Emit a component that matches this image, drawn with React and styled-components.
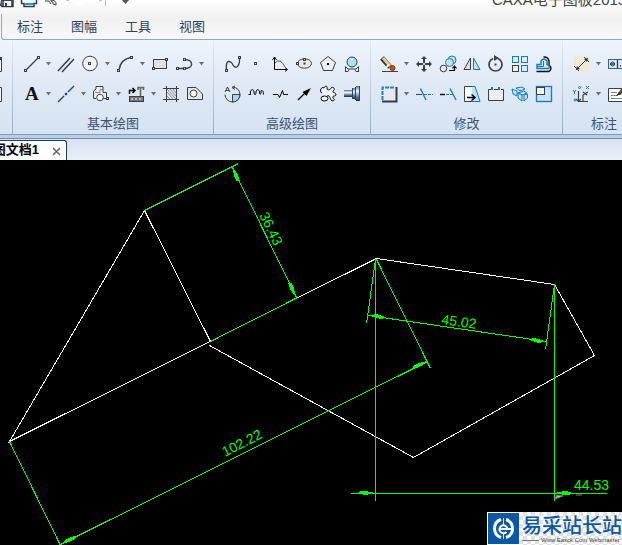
import React from "react";
import styled, { createGlobalStyle } from "styled-components";

const Global = createGlobalStyle`
  * { box-sizing: border-box; }
  body { margin: 0; background: #000; font-family: "Liberation Sans", "Noto Sans CJK SC", sans-serif; }
  button { font: inherit; color: inherit; border: 0; background: none; padding: 0; }
`;

const Window = styled.div`
  display: flex;
  flex-direction: column;
  min-height: 100vh;
  overflow: hidden;
`;

const Header = styled.header`
  background: linear-gradient(#fff, #f0f0f0 45%, #f8f8f8);
`;

const TitleBar = styled.div`
  display: flex;
  justify-content: space-between;
  align-items: flex-end;
  height: 14px;
  overflow: hidden;
`;

const QuickIcons = styled.svg`
  display: block;
  flex: none;
  width: 140px;
  height: 14px;
`;

const Title = styled.h1`
  margin: 0;
  flex: none;
  width: 130px;
  overflow: hidden;
  padding-bottom: 4px;
  font-size: 15px;
  font-weight: 400;
  line-height: 20px;
  white-space: nowrap;
  color: #444;
`;

const MenuTabs = styled.nav`
  display: flex;
  margin-left: 1px;
  padding-left: 1px;
  height: 26px;
  border-left: 1px solid #91a7c4;
  border-bottom: 1px solid #91a7c4;
  border-bottom-left-radius: 3px;
`;

const MenuTab = styled.button`
  padding: 0 14px;
  font-size: 13px;
  line-height: 25px;
  color: #2d4464;
`;

const Ribbon = styled.div`
  display: flex;
  height: 95px;
  overflow: hidden;
  background: linear-gradient(#edf4fc, #dfe9f5 50%, #d6e3f1);
  border-bottom: 1px solid #7f9cc0;
`;

const Group = styled.section`
  flex: none;
  display: flex;
  flex-direction: column;
  padding: 9px 6px 0;
  border-right: 1px solid;
  border-image: linear-gradient(#e4ecf6, #94abc9) 1;
`;

const LeadingGroup = styled(Group)`
  width: 13px;
  padding: 9px 0 0;
`;

const ToolRow = styled.div`
  display: flex;
  height: 30px;
`;

const ToolButton = styled.button`
  flex: none;
  display: flex;
  align-items: center;
  justify-content: center;
  width: 24px;
`;

const CaretButton = styled(ToolButton)`
  width: 11px;
`;

const EdgeButton = styled(ToolButton)`
  width: 12px;
  justify-content: flex-start;
`;

const IconSvg = styled.svg`
  display: block;
  width: 20px;
  height: 20px;
  flex: none;
`;

const EdgeSvg = styled.svg`
  display: block;
  width: 4px;
  height: 20px;
`;

const CaretSvg = styled.svg`
  display: block;
  width: 7px;
  height: 4px;
`;

const GroupLabel = styled.h2`
  margin: 5px 0 0;
  font-size: 13px;
  font-weight: 400;
  line-height: 20px;
  text-align: center;
  color: #3c5278;
`;

const DocumentBar = styled.div`
  display: flex;
  height: 25px;
  padding-top: 5px;
  background: linear-gradient(#b9cde6 3px, #6f8fb8 3px, #6f8fb8 4px, #d9e4f2 4px, #e8eef7);
`;

const DocumentTab = styled.div`
  display: flex;
  justify-content: flex-end;
  align-items: center;
  gap: 13px;
  width: 67px;
  padding-right: 5px;
  overflow: hidden;
  background: #fff;
  border: 1px solid #1f3a68;
  border-width: 1px 1px 0 0;
  border-top-right-radius: 3px;
`;

const DocumentName = styled.span`
  flex: none;
  padding-bottom: 2px;
  font-size: 13px;
  font-weight: 700;
  line-height: 18px;
  color: #000;
`;

const CloseButton = styled.button`
  flex: none;
  display: flex;
  padding-top: 2px;
`;

const CloseSvg = styled.svg`
  width: 9px;
  height: 9px;
`;

const Canvas = styled.main`
  position: relative;
  flex: 1;
  background: #000;
`;

const Drawing = styled.svg`
  display: block;
  width: 100%;
  height: auto;
`;

const DimText = styled.text`
  font: 14px "Liberation Sans", sans-serif;
  fill: #00ff00;
`;

const Brand = styled.aside`
  position: absolute;
  right: 0;
  bottom: 0;
  display: flex;
  width: 135px;
  height: 33px;
  background: repeating-conic-gradient(#e2e2e2 0 25%, #fff 0 50%) 0 0 / 8px 8px;
`;

const BrandLogo = styled.svg`
  flex: none;
  width: 32px;
  height: 33px;
`;

const BrandWords = styled.div`
  flex: none;
  display: flex;
  flex-direction: column;
  padding-left: 3px;
`;

const BrandName = styled.strong`
  font-family: "Noto Sans CJK SC", sans-serif;
  font-size: 20px;
  font-weight: 500;
  line-height: 25px;
  white-space: nowrap;
  color: #0a57a4;
`;

const BrandSite = styled.span`
  display: flex;
  align-items: center;
  gap: 2px;
  font-size: 6px;
  line-height: 6px;
  white-space: nowrap;
  color: #444;
  &::before { content: ""; width: 17px; height: 1px; background: #777; }
`;

const K = "#3b3f46";
const B = "#1479c9";

const Dot = ({ x, y }) => <rect x={x - 1} y={y - 1} width="2" height="2" fill="#fff" stroke={K} />;

const art = {
  line: <><path d="M5 16L17 4" strokeWidth="1.3" /><Dot x={4.5} y={16.5} /><Dot x={17.5} y={3.5} /></>,
  parallel: <path d="M2 17L14 4M6 18L18 5" strokeWidth="1.5" />,
  circle: <><circle cx="10" cy="9.5" r="7.3" fill="#f2f2f2" /><Dot x={9.5} y={9.5} /></>,
  arc: <><path d="M4 16C5 9 9 4.500 16 3.500" strokeWidth="1.4" /><Dot x={3.5} y={16.5} /><Dot x={16.5} y={3.5} /></>,
  rect: <><rect x="3.5" y="5.5" width="13" height="9" fill="#dfe1e6" /><Dot x={3.5} y={14.5} /><Dot x={16.5} y={5.5} /></>,
  polyline: <><path d="M3.500 14.500H10.500M10.500 14.500C20 14.500 20 5.500 10.500 5.500" strokeWidth="1.4" /><Dot x={3.5} y={14.5} /><Dot x={10.5} y={14.5} /><Dot x={10.5} y={5.5} /></>,
  text: <text x="4" y="16" fontFamily="Liberation Serif, serif" fontWeight="700" fontSize="19" fill="#111" stroke="none">A</text>,
  centerline: <g stroke="#174b7c" strokeWidth="1.4"><path d="M2 18L8 12M12 8L18 2" /><rect x="9.5" y="9.5" width="1" height="1" /></g>,
  contour: <><path d="M5 14.500H2.500V7L5 5V2.500H12V8.500H15.500V14.500H12" fill="#eee" /><path d="M4 8.500H9V5.500H12" stroke="#888" /><circle cx="9" cy="13.5" r="3.3" fill="#fff" /><Dot x={16.5} y={14.5} /></>,
  insert: <><rect x="3.5" y="12.5" width="14" height="5" fill="#777" /><path d="M5 15h2m2 0h2m2 0h2" stroke="#fff" /><path d="M3.500 10V6.500H8M6.500 4L9 6.500L6.500 9" stroke="#000" strokeWidth="1.5" /><path d="M11.500 3.500H18M14.500 4V12M12 3V6M17.500 3V6" strokeWidth="1.6" stroke="#666" /></>,
  hatch: <><path d="M5.500 2V18M15.500 2V18M2 4.500H18M2 15.500H18" /><path d="M6 8L12 15M6 5L15 15M9 5L15 12M12 5L15 9M6 12L9 15" stroke="#777" strokeWidth=".8" /></>,
  hole: <><path d="M2.500 3.500H11L17.500 10V15.500H2.500Z" fill="#e4e6ea" /><circle cx="8.5" cy="9.5" r="3.5" fill="#fff" /></>,

  spline: <><path d="M4.500 16C3 3 10 8 11 11C14 16 18 12 17.500 4" strokeWidth="1.4" /><Dot x={4.5} y={16.5} /><Dot x={17.5} y={3.5} /></>,
  point: <Dot x={9.5} y={9.5} />,
  axes: <><path d="M4.500 3V15.500H17M2.500 6L4.500 3L6.500 6M15 13.500L17.500 15.500L15 17.500" stroke="#000" /><path d="M5 9Q10 3 15 13" stroke="#555" /></>,
  ellipse: <><ellipse cx="10.5" cy="9.5" rx="7" ry="4.7" fill="#e8e8e8" /><Dot x={3.5} y={9.5} /><Dot x={10.5} y={5.5} /><rect x="10" y="9" width="1" height="1" /></>,
  polygon: <><path d="M10 2.500L17.500 8.500L14.500 16.500H5.500L2.500 8.500Z" fill="#eceef1" /><rect x="9.500" y="9.500" width="1" height="1" stroke="#000" /></>,
  lens: <><circle cx="10" cy="8" r="5" fill="#a9e2f7" /><path d="M8 6.500Q9 4.500 11 5" stroke="#fff" /><path d="M3.500 18V12.500L6 15H14L16.500 12.500V18M3 17.500H6L7 15.500M17 17.500H14L13 15.500" /></>,
  section: <><path d="M10.500 3A7.500 7.500 0 1 1 3 10.500M13 2L10 3.500L13 5.500" /><path d="M10.500 10.500H18A7.500 7.500 0 0 1 10.500 18Z" fill="#9fdaf0" /><path d="M3 8L5.500 3L8 8M4 6.500H7" /></>,
  wave: <path d="M2.500 10.500H4.500V8C4.500 5 8 5 8 8C8 11.500 10 11.500 10 8C10 5 13.500 5 13.500 8C13.500 11 15 11 15 8C15 5 17.500 6 17.500 10.500" stroke="#000" />,
  breakline: <path d="M3 10.500H8L9.500 13.500L12.500 6.500L13.500 10.500H18" stroke="#000" />,
  arrow: <><path d="M4 16L12 8" stroke="#000" strokeWidth="1.3" /><path d="M17 4L8.500 8L12.500 12Z" fill="#000" stroke="none" /></>,
  gear: <><path d="M4 9C1 8 3 2 6 4C7 1 10 2 9 5C10 7 13 5 13 4C15 2 18 5 15 7C14 9 18 8 18 11C17 13 14 11 15 14C18 16 15 18 13 16C12 14 12 11 9 12" fill="#f4f8fb" stroke="#000" /><ellipse cx="6.500" cy="14.500" rx="3.500" ry="2.500" stroke="#000" fill="#fff" /></>,
  shaft: <><defs><linearGradient id="metal" x1="0" y1="0" x2="0" y2="1"><stop offset="0" stopColor="#596a83" /><stop offset=".35" stopColor="#f5f9fd" /><stop offset=".7" stopColor="#5d7fa6" /><stop offset="1" stopColor="#162c4b" /></linearGradient></defs><g fill="url(#metal)" stroke="none"><rect x="2" y="6" width="9" height="7" /><rect x="10" y="4" width="5" height="11" /><rect x="14" y="2" width="4" height="15" /></g><path d="M10.500 4V15M13.500 3V16M17.500 2V17" stroke="#33455e" /></>,

  erase: <><path d="M3 4L11 13" stroke="#333" strokeWidth="5" /><path d="M4 4L11 12" stroke="#e8ca92" strokeWidth="3" /><path d="M10 10L7 14" stroke="#eee" strokeWidth="2" /><circle cx="13.500" cy="14" r="2.500" fill="#ca4d15" stroke="#923610" /><path d="M3 17.500H19" /></>,
  move: <><g fill={K} stroke="none"><path d="M10 2L13 5H7ZM10 18L7 15H13ZM2 10L5 7V13ZM18 10L15 13V7Z" /></g><path d="M10 5V8M10 12V15M5 10H8M12 10H15" strokeWidth="2" /><circle cx="10" cy="10" r="1.500" fill="#fff" /></>,
  copy: <><g stroke={B} fill="#c5e3f8"><circle cx="14" cy="6" r="4" /><circle cx="11.5" cy="8.5" r="4" /></g><circle cx="5.5" cy="14.5" r="3.3" fill="#e8e8e8" /><path d="M11 16.500H16.500V12.500M14.500 14.500L16.500 12L18.500 14.500" stroke="#000" strokeWidth="1.2" /></>,
  mirror: <><path d="M2 15.500L8.500 4V15.500Z" fill="#ddd" /><path d="M11.500 4L18 15.500H11.500Z" fill="#bce1f8" stroke={B} /></>,
  rotate: <><path d="M12 4.500A6.500 6.500 0 1 1 7 4.500" strokeWidth="1.7" /><path d="M8 1L13 4L8 7Z" fill={K} stroke="none" /><rect x="9" y="10" width="1" height="1" /></>,
  array: <><g fill="#d9ecfa" stroke={B}><rect x="2.5" y="2.5" width="6" height="6" /><rect x="11.5" y="2.5" width="6" height="6" /><rect x="11.5" y="11.500" width="6" height="6" /></g><rect x="2.5" y="11.5" width="6" height="6" fill="#eee" /></>,
  offset: <><path d="M2.500 17.500H15Q19 14 15 11V7Q14 2.500 9.500 3" stroke="#111" strokeWidth="1.4" /><path d="M3 14.500H14.500Q17 12 13 10.500V7Q10 3 7 7V10.500H3Z" fill="#d3edfb" stroke={B} strokeWidth="1.4" /><path d="M3 12.500H9.500V7" stroke={B} /></>,
  stretchBox: <><rect x="3" y="3" width="15" height="15" fill="#e7e9ed" stroke="none" /><path d="M17.500 3V17.500H3" stroke="#333b4d" strokeWidth="2" /><path d="M3.500 16V3.500H16" stroke="#1686dd" strokeWidth="2" strokeDasharray="4 1" /></>,
  trim: <><path d="M2 10.500H8" /><g stroke={B}><path d="M6.500 4.500L12 16" strokeWidth="1.4" /><path d="M10 10.500H19" strokeDasharray="3 1" /></g></>,
  extend: <><path d="M2 10.500H7" stroke="#000" strokeWidth="1.4" /><g stroke={B}><path d="M8 10.500H15" strokeDasharray="3 1" /><path d="M12 4.500L18 16" strokeWidth="1.4" /></g></>,
  stretch: <><path d="M10 2.500H2.500V17.500H10" fill="#fff" /><path d="M10 2.500H13L18 17.500H10" fill="#bce1f8" stroke={B} /><path d="M5 13.500H12M9.500 10.500L13 13.500L9.500 16.500" stroke="#000" strokeWidth="1.5" /></>,
  breakBox: <><path d="M5 5.500H2.500V16.500H17.500V5.500H15M8 5.500H12" fill="#eceef1" /><path d="M5 4.500H7M12 4.500H14" stroke={B} strokeWidth="3" /></>,
  explode: <g fill="#c5e5f9" stroke={B}><path d="M2 5L7 7V12L3 10ZM6 4L12 3L15 5L10 7ZM8 9L14 7L17 9L12 11Z" /><path d="M8 9V14L12 17V11ZM14 11L17.500 10V14L14 17Z" /></g>,
  scale: <><rect x="2.500" y="2.500" width="15" height="15" fill="#c5e4f8" stroke={B} strokeWidth="1.300" /><rect x="2.500" y="3.500" width="8" height="7" fill="#f6f6f6" /></>,

  dimension: <><rect x="3" y="2" width="16" height="16" fill="#eeead5" stroke="none" /><path d="M5 16L17 4M3 12L8 17M13 3L18 8" /><path d="M5 16L6 12L9 15ZM17 4L13 5L16 8Z" fill={K} stroke="none" /></>,
  tolerance: <><rect x="2.5" y="5.500" width="20" height="9" fill="#dceaf8" stroke="#315f94" /><path d="M4 10H9M11.500 6V14M14 12H15M17 7V13" stroke="#233f62" strokeWidth="1.300" /><circle cx="6.500" cy="10" r="2" stroke="#233f62" /></>,
  coordinate: <><path d="M7.500 7V17.500H17M12 8L16 11M12 11V17.500M12 11L17 8M5 15L7.500 17.500L10 15" strokeWidth="1.200" /><g stroke={B}><circle cx="8.500" cy="3.500" r="1" /><circle cx="4" cy="16" r="1" /><path d="M15 2L18 5M18 2L15 5M2 6L3.500 8L5 6M3.500 8V10" /></g></>,
  note: <><path d="M2.500 4.500H21V17.500H2.500Z" fill="#fff" /><path d="M5 8.500H11M5 11.500H12M5 14.500H17" stroke="#888" /><path d="M19 3L14 9" stroke="#733a25" strokeWidth="3" /><path d="M10 12L13 8L16 10Z" fill="#222" stroke="none" /></>,
};

const Icon = ({ name }) => (
  <IconSvg viewBox="0 0 20 20" fill="none" stroke={K} aria-hidden="true">{art[name]}</IconSvg>
);

const EdgeTool = ({ label, heading }) => (
  <EdgeButton aria-label={label}>
    <EdgeSvg viewBox="0 0 4 20" fill="none" stroke={K} aria-hidden="true">
      <path d="M0 3.500H1.500V17.500H0" fill="#f8f8f8" />
      {heading && <path d="M0 4.500H2" strokeWidth="3" />}
    </EdgeSvg>
  </EdgeButton>
);

const Tool = ({ name, label, menu }) => (
  <>
    <ToolButton aria-label={label}><Icon name={name} /></ToolButton>
    {menu && (
      <CaretButton aria-label={`${label} ▾`}>
        <CaretSvg viewBox="0 0 7 4"><path d="M1 0H6L3.500 3.500Z" fill="#6d6f74" /></CaretSvg>
      </CaretButton>
    )}
  </>
);

const groups = [
  {
    label: "基本绘图",
    rows: [
      [["line", "直线", 1], ["parallel", "平行线"], ["circle", "圆", 1], ["arc", "圆弧", 1], ["rect", "矩形"], ["polyline", "多段线", 1]],
      [["text", "文字", 1], ["centerline", "中心线", 1], ["contour", "等距线", 1], ["insert", "插入", 1], ["hatch", "剖面线"], ["hole", "填充"]],
    ],
  },
  {
    label: "高级绘图",
    rows: [
      [["spline", "样条"], ["point", "点"], ["axes", "公式曲线"], ["ellipse", "椭圆"], ["polygon", "正多边形"], ["lens", "局部放大"]],
      [["section", "圆弧拟合"], ["wave", "波浪线"], ["breakline", "双折线"], ["arrow", "箭头"], ["gear", "齿形"], ["shaft", "孔/轴"]],
    ],
  },
  {
    label: "修改",
    rows: [
      [["erase", "删除", 1], ["move", "平移"], ["copy", "复制"], ["mirror", "镜像"], ["rotate", "旋转"], ["array", "阵列"], ["offset", "等距"]],
      [["stretchBox", "选择", 1], ["trim", "裁剪"], ["extend", "延伸"], ["stretch", "拉伸"], ["breakBox", "打断"], ["explode", "分解"], ["scale", "缩放"]],
    ],
  },
  {
    label: "标注",
    rows: [
      [["dimension", "尺寸标注", 1], ["tolerance", "形位公差", 1]],
      [["coordinate", "坐标标注", 1], ["note", "引出说明", 1]],
    ],
  },
];

/* Filled arrowhead with its tip at (x, y), pointing along the given angle. */
const Head = ({ x, y, angle }) => (
  <path d="M0 0L-9 -2L-15 -2L-16 1L-9 2Z" fill="#00ff00" stroke="none" transform={`translate(${x} ${y}) rotate(${angle})`} />
);

export default function App() {
  return (
    <Window>
      <Global />
      <Header>
        <TitleBar>
          <QuickIcons viewBox="0 0 140 14" fill="none" stroke="#333b48" aria-hidden="true">
            <path d="M1 0H13V6.500H2L0 4.500" fill="#56637b" strokeWidth="1.500" />
            <rect x="4" y="1" width="7" height="5" fill="#eef2f8" stroke="none" />
            <rect x="5" y="3" width="2" height="3" fill="#333b48" stroke="none" />
            <path d="M21.500 0V3.500H24V6.500H34V3.500H36.500V0" fill="#fff" strokeWidth="1.500" />
            <path d="M25 4H33" stroke="#12a5dc" strokeWidth="2" />
            <path d="M45 1H49L51 4M50 0Q57 0 56 5L53 4Q54 2 51 1" fill="#fff" />
            <path d="M77 3Q83 5 81 0" stroke="#fff" strokeWidth="3" />
            <path d="M66 0H69M99 0H102" stroke="#888" />
            <path d="M105.500 0V6" stroke="#bbb" />
            <path d="M122 0H129L125.500 4Z" fill="#555" stroke="none" />
          </QuickIcons>
          <Title>CAXA电子图板2015</Title>
        </TitleBar>
        <MenuTabs>
          {["标注", "图幅", "工具", "视图"].map((t) => <MenuTab key={t}>{t}</MenuTab>)}
        </MenuTabs>
      </Header>

      <Ribbon>
        <LeadingGroup>
          <ToolRow><EdgeTool label="表格" heading /></ToolRow>
          <ToolRow><EdgeTool label="图框" /></ToolRow>
        </LeadingGroup>
        {groups.map((g) => (
          <Group key={g.label}>
            {g.rows.map((row, i) => (
              <ToolRow key={i}>
                {row.map(([name, label, menu]) => <Tool key={name} name={name} label={label} menu={menu} />)}
              </ToolRow>
            ))}
            <GroupLabel>{g.label}</GroupLabel>
          </Group>
        ))}
      </Ribbon>

      <DocumentBar>
        <DocumentTab>
          <DocumentName>图文档1</DocumentName>
          <CloseButton aria-label="关闭">
            <CloseSvg viewBox="0 0 9 9"><path d="M1 1L8 8M8 1L1 8" stroke="#666" strokeWidth="1.500" /></CloseSvg>
          </CloseButton>
        </DocumentTab>
      </DocumentBar>

      <Canvas>
        <Drawing viewBox="0 160 622 385" fill="none">
          <g stroke="#fff" shapeRendering="crispEdges">
            <path d="M210.500 341.500L144.500 210.500L9.500 441.500L376.500 258.500L554.500 284.500L594.500 355.500L413.500 457.500L209.500 345.500" />
          </g>
          <g stroke="#00ff00" shapeRendering="crispEdges">
            <path d="M144.500 210.500L238.500 163.500M210.500 341.500L297.500 297.500M232.500 167.500L296.500 297.500" />
            <path d="M9.500 441.500L60.500 545.500M376.500 259.500L430.500 368.500M60.500 544.500L427.500 361.500" />
            <path d="M375.500 259.500L366.500 323.500M554.500 284.500L545.500 349.500M368.500 315.500L546.500 341.500" />
            <path d="M375.500 259V501M554.500 285V501M351 493.500H607" />
            <Head x={232} y={167} angle={244} />
            <Head x={296} y={297} angle={64} />
            <Head x={427} y={361} angle={-27} />
            <Head x={61} y={544} angle={153} />
            <Head x={368} y={315} angle={188} />
            <Head x={547} y={342} angle={8} />
            <Head x={375} y={493} angle={0} />
            <Head x={555} y={493} angle={180} />
          </g>
          <path d="M555 499L557 495L563 496ZM576 495H582" fill="#bbb" stroke="#777" />
          <DimText transform="translate(259 215) rotate(64)">36.43</DimText>
          <DimText transform="translate(441 324) rotate(8)">45.02</DimText>
          <DimText transform="translate(225 457) rotate(-27)">102.22</DimText>
          <DimText x="574" y="490">44.53</DimText>
        </Drawing>
        <Brand>
          <BrandLogo viewBox="0 0 32 33">
            <rect width="32" height="33" fill="#fff" />
            <rect x="1" y="1" width="31" height="31" fill="#0a57a4" />
            <g fill="none" stroke="#fff" strokeWidth="3">
              <path d="M14 7.500A9.500 9.500 0 0 0 14 25.500M19 7.500A9.500 9.500 0 0 1 19 25.500" />
              <path d="M20.500 17A4 4 0 1 0 19.500 20M13 17H25" strokeWidth="2" />
              <path d="M16.500 6V13M16.500 21V27" strokeWidth="1" />
            </g>
          </BrandLogo>
          <BrandWords>
            <BrandName>易采站长站</BrandName>
            <BrandSite>Www.Easck.Com Webmaster</BrandSite>
          </BrandWords>
        </Brand>
      </Canvas>
    </Window>
  );
}
